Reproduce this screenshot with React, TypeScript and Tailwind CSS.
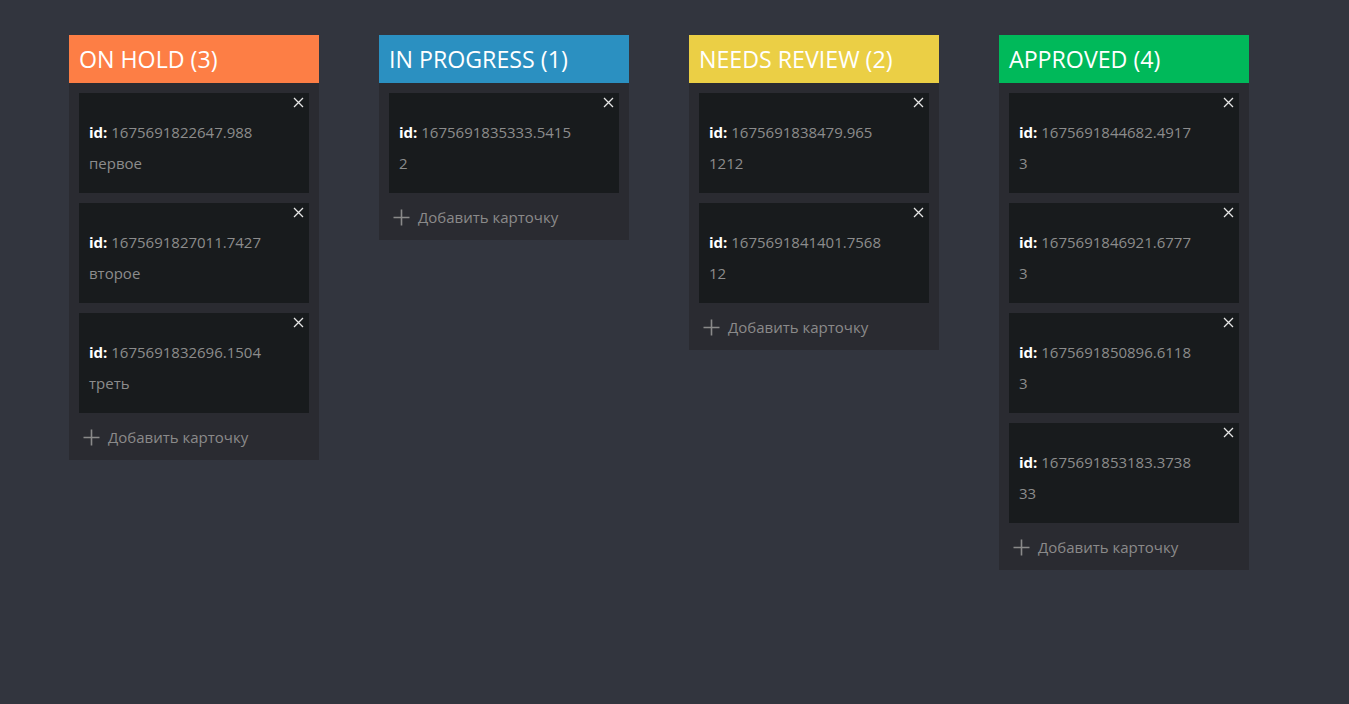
import React from "react";

type Card = { id: string; text: string };
type Col = { title: string; bg: string; cards: Card[] };

const cols: Col[] = [
  {
    title: "ON HOLD",
    bg: "bg-[#fd7e45]",
    cards: [
      { id: "1675691822647.988", text: "первое" },
      { id: "1675691827011.7427", text: "второе" },
      { id: "1675691832696.1504", text: "треть" },
    ],
  },
  {
    title: "IN PROGRESS",
    bg: "bg-[#2b90c1]",
    cards: [{ id: "1675691835333.5415", text: "2" }],
  },
  {
    title: "NEEDS REVIEW",
    bg: "bg-[#ebcf45]",
    cards: [
      { id: "1675691838479.965", text: "1212" },
      { id: "1675691841401.7568", text: "12" },
    ],
  },
  {
    title: "APPROVED",
    bg: "bg-[#00b95a]",
    cards: [
      { id: "1675691844682.4917", text: "3" },
      { id: "1675691846921.6777", text: "3" },
      { id: "1675691850896.6118", text: "3" },
      { id: "1675691853183.3738", text: "33" },
    ],
  },
];

function CloseIcon() {
  return (
    <svg width="11" height="11" viewBox="0 0 11 11" fill="none">
      <path d="M1 1L10 10M10 1L1 10" stroke="#e6e6e6" strokeWidth="1.3" />
    </svg>
  );
}

function PlusIcon() {
  return (
    <svg width="17" height="17" viewBox="0 0 17 17" fill="none">
      <path d="M8.5 0.5V16.5M0.5 8.5H16.5" stroke="#8a8a8a" strokeWidth="1.6" />
    </svg>
  );
}

export default function App() {
  return (
    <div
      className="min-h-[704px] w-full bg-[#32353e]"
      style={{ fontFamily: '"Open Sans", "Noto Sans", sans-serif' }}
    >
      <div className="flex items-start gap-[60px] pl-[69px] pt-[35px]">
        {cols.map((c) => (
          <div key={c.title} className="w-[250px] bg-[#2a2b31]">
            <div
              className={`${c.bg} h-[48px] flex items-center pl-[10px] pt-[2px] text-[23.2px] text-white leading-none`}
            >
              {c.title} ({c.cards.length})
            </div>
            <div className="px-[10px] pt-[10px] flex flex-col gap-[10px]">
              {c.cards.map((card) => (
                <div
                  key={card.id}
                  className="relative h-[100px] bg-[#181b1d] px-[10px] pt-[28px]"
                >
                  <div className="absolute right-[5px] top-[4px]">
                    <CloseIcon />
                  </div>
                  <div className="text-[15px] leading-[22px] text-[#8c8c8c]">
                    <span className="font-bold text-white">id:</span> {card.id}
                  </div>
                  <div className="mt-[9px] text-[15px] leading-[22px] text-[#8c8c8c]">
                    {card.text}
                  </div>
                </div>
              ))}
            </div>
            <div className="flex items-center h-[47px] pl-[14px] pt-[2px] gap-[8px] text-[15px] text-[#8a8a8a]">
              <PlusIcon />
              <span>Добавить карточку</span>
            </div>
          </div>
        ))}
      </div>
    </div>
  );
}
